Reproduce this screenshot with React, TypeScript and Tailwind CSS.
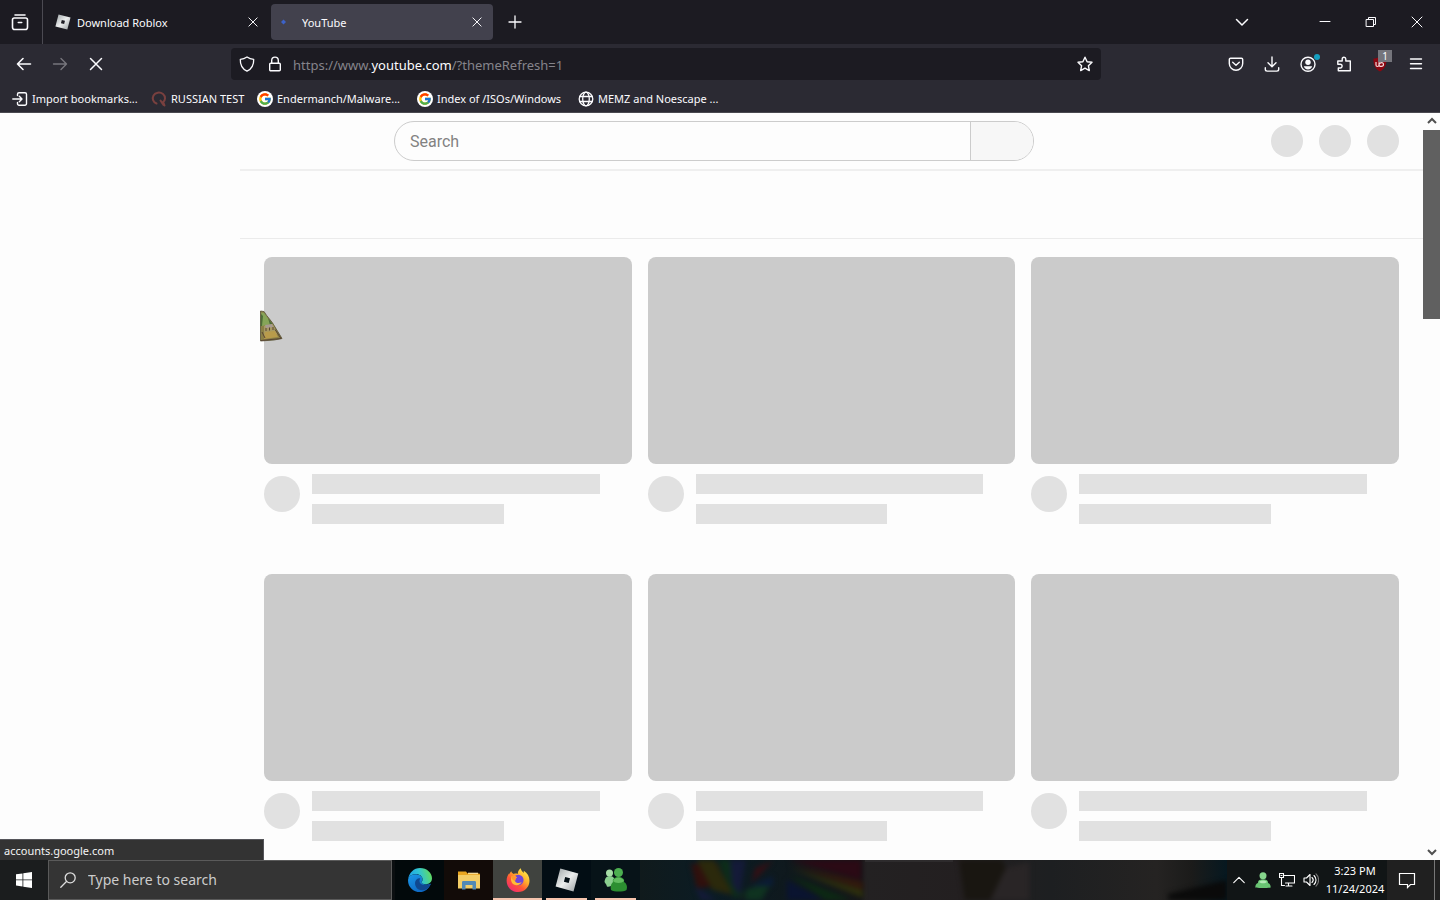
import React from "react";
import { FcGoogle } from "react-icons/fc";

type IconProps = { className?: string; children: React.ReactNode; box?: number };

function Icon({ className = "size-4", children, box = 16 }: IconProps) {
  return (
    <svg viewBox={`0 0 ${box} ${box}`} className={`${className} shrink-0`} fill="none" stroke="currentColor" strokeWidth="1.3" strokeLinecap="round" strokeLinejoin="round" aria-hidden="true">
      {children}
    </svg>
  );
}

const Cross = ({ className }: { className?: string }) => (
  <Icon className={className}><path d="M2.5 2.5l11 11M13.5 2.5l-11 11" /></Icon>
);

function RobloxLogo({ className = "size-4" }: { className?: string }) {
  return (
    <svg viewBox="0 0 24 24" className={`${className} shrink-0`} aria-hidden="true">
      <defs>
        <linearGradient id="silver" x1="0" y1="0" x2="1" y2="1">
          <stop offset="0" stopColor="#9aa2a4" />
          <stop offset=".5" stopColor="#eceeee" />
          <stop offset="1" stopColor="#989d9f" />
        </linearGradient>
      </defs>
      <path fill="url(#silver)" fillRule="evenodd" d="M5.3.6 23.3 5.4 18.5 23.4.6 18.6ZM10.2 8.9 8.9 13.7 13.7 15 15 10.2Z" />
    </svg>
  );
}

function EdgeLogo() {
  return (
    <svg viewBox="0 0 24 24" className="size-6" aria-hidden="true">
      <defs>
        <linearGradient id="edgeTop" x1="0" y1="0.6" x2="1" y2="0.4">
          <stop offset="0" stopColor="#1d9fe8" />
          <stop offset=".5" stopColor="#2fc4d4" />
          <stop offset="1" stopColor="#63db5c" />
        </linearGradient>
        <linearGradient id="edgeLow" x1="0" y1="0" x2=".7" y2="1">
          <stop offset="0" stopColor="#1b98e8" />
          <stop offset="1" stopColor="#0c64c0" />
        </linearGradient>
      </defs>
      <path fill="url(#edgeLow)" d="M.1 11.5C.8 7.7 4.200 6.200 7.500 6.200c4 0 7 2.200 7 5.200 0 1.200-.9 1.700-.9 2.600 0 2.300 3.600 3.400 8.600 1.700.5-.1.7.2.4.7C20.600 20.700 16.800 24 12 24 5 24-.6 18.300.1 11.500Z" />
      <path fill="#10488f" d="M8.800 11.200c-2.600 2-2.400 7.400 1.400 10 4 2.600 9.300.6 12.100-4.500.2-.5 0-.9-.5-.7-5 2-10.300.7-10.300-3.100 0-1 .7-1.600.7-2.300-.8-.5-2.300-.3-3.400.6Z" />
      <path fill="url(#edgeTop)" d="M.2 11C1 4.800 6 0 12 0c7 0 12 5 12 10.300 0 3.700-2.600 5.900-6 5.900-2.800 0-4.500-1-4.500-2 0-.7 1.100-1.100 1.100-3 0-2.800-3-5.300-6.900-5.300C3.800 5.900.9 8.300.2 11Z" />
    </svg>
  );
}

function FolderLogo() {
  return (
    <svg viewBox="0 0 24 24" className="size-6" aria-hidden="true">
      <path fill="#e8a520" d="M1 3.500h8l1.500 2H22a1 1 0 0 1 1 1V20H1Z" />
      <path fill="#f6dc96" d="M11 4.700h10v1.500H11Z" />
      <path fill="#f3cd66" d="M1 7h22v13.500H1Z" />
      <path fill="#5289b5" d="M5 21.500v-7.200A1.300 1.300 0 0 1 6.300 13h11.400a1.300 1.300 0 0 1 1.300 1.300v7.200h-3.500V17h-7v4.500Z" />
    </svg>
  );
}

function FirefoxLogo() {
  return (
    <svg viewBox="0 0 24 24" className="size-6" aria-hidden="true">
      <defs>
        <linearGradient id="fox" x1=".85" y1=".1" x2=".2" y2=".95">
          <stop offset="0" stopColor="#ffe84a" />
          <stop offset=".35" stopColor="#ffae2b" />
          <stop offset=".65" stopColor="#ff5535" />
          <stop offset="1" stopColor="#f22c70" />
        </linearGradient>
      </defs>
      <path fill="url(#fox)" d="M5.200 3.200c.5 1.500 1.400 2.300 2.600 2.700 1.200-.5 2.600-.5 4 0C11.700 3.500 13 1.300 14.800.2c.2 2.200 1.600 3.300 3.100 4.700-.1-.8-.2-1.600-.1-2.200 3.700 2.300 5.700 6 5.700 10C23.500 19 18.500 24 12.100 24S.6 19 .6 12.700c0-3 1.100-5.700 2.600-7.500v1.300c.5-1.300 1.200-2.300 2-3.300Z" />
      <circle cx="12.300" cy="12" r="5.300" fill="#7046d8" />
      <path fill="#ffbd36" d="M5.600 8.300c1.500-.7 3-.7 4 0 .8.600 1 .9 1.300 1-.2.700-1 1-1.400 1.500 0 1-.2 1.700-.5 2.200.9 2.500 4.500 2.700 6.700 1-1 3.600-7.700 4.600-9.900.5-1.200-2.200-.9-4.200-.2-6.200Z" />
      <path fill="#ff942f" d="M5.300 8.500c1.700-.7 3.300-.5 4.300.1.800.5 1.200.7 1.300.9-.5.7-1.100.9-1.400 1.400-.1.900-.3 1.500-.8 2.100-1.700-.7-3.100-2-3.400-4.500Z" />
    </svg>
  );
}

function Buddies() {
  return (
    <svg viewBox="0 0 24 24" className="size-6" aria-hidden="true">
      <circle cx="5.500" cy="5" r="3.500" fill="#a6dda5" />
      <path fill="#8bcf8f" d="M.5 14c.5-4 2-6 5.500-6s5.500 3 5 7c-1 3-3 3-4 3-2 1-4.500 1.500-4.500-1Z" />
      <circle cx="14.500" cy="4.500" r="4.500" fill="#4caf50" />
      <path fill="#2c8f31" d="M7 22c-1-5 1-7 2-8-1-3 2-5 5.500-5s6.500 2 5.500 5c2 1 4 4 2.500 8-3 2-12.500 2-15.500 0Z" />
      <path fill="#62bd60" d="M9 13c2 2.500 9 2.500 11 0-.5-2.300-3-3.500-5.500-3.500S9.500 10.700 9 13Z" />
    </svg>
  );
}

function Buddy() {
  return (
    <svg viewBox="0 0 16 16" className="size-4" aria-hidden="true">
      <circle cx="8" cy="3.800" r="3.500" fill="#86d58c" />
      <path fill="#69c473" d="M.3 15.500c0-2.500 1-4 2.700-4.500-.5-2.500 2-3.700 5-3.700s5.500 1.200 5 3.700c1.700.5 2.700 2 2.700 4.500-3 .7-12.400.7-15.400 0Z" />
      <path fill="#b3eab6" d="M4 10c2 1.800 6 1.800 8 0-1-1-2.200-1.500-4-1.500S5 9 4 10Z" />
    </svg>
  );
}

function ToolButton({ label, children, className = "" }: { label: string; children: React.ReactNode; className?: string }) {
  return (
    <button aria-label={label} className={`flex h-8 w-9 shrink-0 items-center justify-center ${className}`}>
      {children}
    </button>
  );
}

function TabStrip() {
  return (
    <div className="flex h-11 shrink-0 items-center bg-[#1c1b22]">
      <button aria-label="Recent browsing" className="flex h-full w-[43px] items-center justify-center border-r border-[#4b4a52] pr-0.5">
        <Icon className="size-[18px]" box={18}>
          <path strokeWidth="1.600" d="M4 2h10M1.500 6.800A1.800 1.800 0 0 1 3.300 5h11.400a1.800 1.800 0 0 1 1.800 1.800v7.400a2.300 2.300 0 0 1-2.300 2.300H3.800a2.300 2.300 0 0 1-2.300-2.300ZM7.300 9.500h3.400" />
        </Icon>
      </button>
      <div className="flex h-9 w-[228px] items-center gap-1.5 pl-3 pr-2">
        <RobloxLogo />
        <span className="grow pt-0.5">Download Roblox</span>
        <button aria-label="Close Download Roblox" className="flex size-5 items-center justify-center"><Cross className="size-3" /></button>
      </div>
      <div className="flex h-9 w-[222px] items-center rounded bg-[#42414d] pl-2 pr-1.5">
        <svg viewBox="0 0 16 16" className="mr-[7px] size-4" aria-hidden="true"><path fill="#3c62c8" d="M2 8 4.500 5.500 7 8 4.500 10.500Z" /></svg>
        <span className="grow pt-0.5">YouTube</span>
        <button aria-label="Close YouTube" className="flex size-5 items-center justify-center"><Cross className="size-3" /></button>
      </div>
      <ToolButton label="New tab" className="ml-1">
        <Icon><path d="M8 2v12M2 8h12" /></Icon>
      </ToolButton>
      <div className="ml-auto flex items-center">
        <ToolButton label="List all tabs" className="mr-[42px]"><Icon><path strokeWidth="1.500" d="M2.500 5.500 8 11l5.500-5.500" /></Icon></ToolButton>
        <button aria-label="Minimize" className="flex h-8 w-[46px] items-center justify-center"><Icon className="size-3" box={12}><path strokeWidth="1" d="M1 5.500h10" /></Icon></button>
        <button aria-label="Restore" className="flex h-8 w-[46px] items-center justify-center"><Icon className="size-3" box={12}><path strokeWidth="1" strokeLinejoin="miter" d="M1.500 3.500h7v7h-7ZM3.500 3.500v-2h7v7h-2" /></Icon></button>
        <button aria-label="Close window" className="flex h-8 w-[46px] items-center justify-center"><Icon className="size-3" box={12}><path strokeWidth="1" d="M1 1l10 10M11 1 1 11" /></Icon></button>
      </div>
    </div>
  );
}

function NavBar() {
  return (
    <div className="flex h-10 shrink-0 items-center pl-1.5 pr-1.5">
      <ToolButton label="Back"><Icon><path strokeWidth="1.600" d="M14.500 8h-13M7 2.500 1.500 8 7 13.500" /></Icon></ToolButton>
      <ToolButton label="Forward" className="text-[#77767d]"><Icon><path strokeWidth="1.400" d="M1.500 8h13M9 2.500 14.500 8 9 13.500" /></Icon></ToolButton>
      <ToolButton label="Stop"><Icon><path strokeWidth="1.500" d="M2.500 2.500l11 11M13.500 2.500l-11 11" /></Icon></ToolButton>
      <div className="ml-[117px] mr-[117px] flex h-8 min-w-0 grow items-center rounded bg-[#1c1b22] pl-2 pr-2">
        <Icon><path d="M8 .9C10 2.400 12.500 3.200 14.700 3.300 14.900 8.500 12.800 13 8 15.200 3.200 13 1.100 8.500 1.300 3.300 3.500 3.200 6 2.400 8 .9Z" /></Icon>
        <Icon className="ml-3 size-4"><path strokeWidth="1.400" d="M2.700 8.200a1 1 0 0 1 1-1h8.600a1 1 0 0 1 1 1v5.600a1 1 0 0 1-1 1H3.700a1 1 0 0 1-1-1ZM4.700 7V4.400a3.300 3.300 0 0 1 6.600 0V7" /></Icon>
        <div className="ml-2.5 grow whitespace-nowrap pt-0.5 text-[13px] text-[#85848b]" role="textbox" aria-label="Address">
          https://www.<span className="text-[#fbfbfe]">youtube.com</span>/?themeRefresh=1
        </div>
        <button aria-label="Bookmark this page"><Icon><path strokeWidth="1.400" d="m8 1.200 2.100 4.500 4.900.6-3.600 3.400.9 4.900L8 12.200l-4.300 2.400.9-4.900L1 6.300l4.900-.6Z" /></Icon></button>
      </div>
      <ToolButton label="Save to Pocket"><Icon><path strokeWidth="1.400" d="M1.300 3.500a1.300 1.300 0 0 1 1.300-1.300h10.800a1.300 1.300 0 0 1 1.300 1.300v4a6.700 6.700 0 0 1-13.400 0ZM4.700 6.300 8 9.300l3.300-3" /></Icon></ToolButton>
      <ToolButton label="Downloads"><Icon><path strokeWidth="1.400" d="M8 1v9.500M4 6.800l4 4 4-4M1.300 11.800v1.500a1.800 1.800 0 0 0 1.800 1.800h9.800a1.800 1.800 0 0 0 1.800-1.800v-1.500" /></Icon></ToolButton>
      <ToolButton label="Account" className="relative">
        <Icon><circle cx="8" cy="8.300" r="7" strokeWidth="1.400" /><circle cx="8" cy="6.300" r="2.700" fill="currentColor" stroke="none" /><path fill="currentColor" stroke="none" d="M3.800 10.200h8.400c-.5 2-2 3.200-4.200 3.200s-3.700-1.200-4.200-3.200Z" /></Icon>
        <span className="absolute right-1.5 top-1.5 size-1.5 rounded-full bg-[#159fc0]" />
      </ToolButton>
      <ToolButton label="Extensions"><Icon><path strokeWidth="1.400" d="M2.300 14.800V12h1.900a1.900 1.900 0 0 0 0-3.800H1.800V5h4.400V3.100a1.800 1.800 0 0 1 3.600 0V5h4.500v9.800Z" /></Icon></ToolButton>
      <ToolButton label="uBlock Origin" className="relative">
        <svg viewBox="0 0 16 16" className="size-4" aria-hidden="true">
          <path fill="#8c0610" d="M8 .5C10 2 12.500 2.500 14.500 2.500 14.700 8.500 13 13 8 15.500 3 13 1.300 8.500 1.500 2.500 3.500 2.500 6 2 8 .5Z" />
          <path fill="none" stroke="#f4d9db" strokeWidth="1.200" d="M4 6v3c0 2 3 2 3 0V6.200M7 9c0 2 4.500 2 4.500-.5S8 6 7 8.500" />
        </svg>
        <span className="absolute right-1.5 top-0.5 h-3 w-3.5 bg-[#75757c] text-center text-[10px] leading-3 text-white">1</span>
      </ToolButton>
      <ToolButton label="Menu"><Icon><path strokeWidth="1.400" d="M2.500 3h11M2.500 7.800h11M2.500 12.500h11" /></Icon></ToolButton>
    </div>
  );
}

function BookmarkBar() {
  return (
    <nav aria-label="Bookmarks" className="flex h-7 shrink-0 items-center gap-3 pl-3 pt-0.5 whitespace-nowrap">
      <a href="#" className="flex w-[127px] items-center gap-1">
        <Icon><path strokeWidth="1.400" d="M5.500 4.500V3.300A1.500 1.500 0 0 1 7 1.800h6a1.500 1.500 0 0 1 1.500 1.500v9.400a1.500 1.500 0 0 1-1.500 1.500H7a1.500 1.500 0 0 1-1.500-1.500v-1.200M.8 8h9M7.300 5.300 10 8l-2.700 2.700" /></Icon>
        Import bookmarks...
      </a>
      <a href="#" className="flex w-[94px] items-center gap-1">
        <Icon className="size-4 text-[#79403f]"><path strokeWidth="2" d="M5.500 12.500C2 11 .9 7.500 2.500 4.500 4.300 1.300 9 .7 12 3c3 2.600 2.300 6.300.2 8l1.300 3.500M9.500 9.500l3 4.500" /></Icon>
        RUSSIAN TEST
      </a>
      <a href="#" className="flex w-[148px] items-center gap-1">
        <span className="flex size-4 shrink-0 items-center justify-center rounded-full bg-white"><FcGoogle className="size-3.5" /></span>
        Endermanch/Malware...
      </a>
      <a href="#" className="flex w-[149px] items-center gap-1">
        <span className="flex size-4 shrink-0 items-center justify-center rounded-full bg-white"><FcGoogle className="size-3.5" /></span>
        Index of /ISOs/Windows
      </a>
      <a href="#" className="flex items-center gap-1">
        <Icon><circle cx="8" cy="8" r="6.800" /><ellipse cx="8" cy="8" rx="3.300" ry="6.800" /><path d="M1.700 5.500h12.600M1.700 10.500h12.600" /></Icon>
        MEMZ and Noescape ...
      </a>
    </nav>
  );
}

function VideoPlaceholder() {
  return (
    <div className="pb-[50px]">
      <div className="aspect-video rounded-lg bg-[#cbcbcb]" />
      <div className="mt-2.5 flex gap-3">
        <div className="mt-0.5 size-9 shrink-0 rounded-full bg-[#e1e1e1]" />
        <div className="flex grow flex-col gap-2.5">
          <div className="h-5 w-[90%] bg-[#e1e1e1]" />
          <div className="h-5 w-[60%] bg-[#e1e1e1]" />
        </div>
      </div>
    </div>
  );
}

function Page() {
  return (
    <div className="relative flex min-h-0 grow bg-[#fdfdfd]">
      <aside className="w-60 shrink-0" />
      <main className="min-w-0 grow overflow-hidden">
        <header className="flex h-[58px] items-center border-b-2 border-[#efefef] pr-6">
          <form className="ml-[154px] flex h-10 w-[640px] overflow-hidden rounded-full border border-[#cccccc]">
            <input aria-label="Search" placeholder="Search" className="min-w-0 grow bg-transparent px-[15px] pt-0.5 font-[Roboto,sans-serif] text-base placeholder:text-[#828282] outline-none" />
            <button type="button" aria-label="Submit search" className="w-[63px] border-l border-[#cccccc] bg-[#f7f7f7]" />
          </form>
          <div className="ml-auto flex gap-4">
            <div className="size-8 rounded-full bg-[#e1e1e1]" />
            <div className="size-8 rounded-full bg-[#e1e1e1]" />
            <div className="size-8 rounded-full bg-[#e1e1e1]" />
          </div>
        </header>
        <div className="h-[68px] border-b border-[#ebebeb]" />
        <div className="grid grid-cols-3 gap-x-4 px-6 pt-[18px]">
          {[0, 1, 2, 3, 4, 5].map((n) => <VideoPlaceholder key={n} />)}
        </div>
      </main>
      <div className="flex w-[17px] shrink-0 flex-col items-center text-[#505050]">
        <Icon className="my-0.5 size-3" box={12}><path strokeWidth="2" strokeLinecap="butt" strokeLinejoin="miter" d="M2 8 6 4l4 4" /></Icon>
        <div className="mt-px h-[189px] w-full bg-[#606060]" />
        <Icon className="mb-0.5 mt-auto size-3" box={12}><path strokeWidth="2" strokeLinecap="butt" strokeLinejoin="miter" d="M2 4l4 4 4-4" /></Icon>
      </div>
      <div className="absolute bottom-0 left-0 h-[21px] w-[264px] border-r border-t border-[#55555a] bg-[#333333] pl-1 pt-px leading-5 text-[#f4f4f4]">accounts.google.com</div>
      <svg viewBox="0 0 24 32" className="absolute left-[259px] top-[197px] h-8 w-6" aria-hidden="true">
        <path fill="#8b8046" stroke="#565034" strokeWidth=".8" d="M1.500 1 5 1.500C8 7 13 11 16 17l7 11.500-8 1.500-13.500 1Z" />
        <path fill="#86a558" d="M2.500 2.500 5 3l8 11-10 2Z" />
        <path fill="#4e6d38" d="M2 4 4 6 3 16H1.500ZM9 8l6 8-4-1Z" />
        <path fill="#a79a62" d="M5 16l9-2 4 10-13 3Z" />
        <path fill="#a89a92" d="M6 15l7-1 1 3-7 1Z" />
        <path fill="#b89b4b" d="M6 22l10-1 3 6-14 2Z" />
        <path fill="none" stroke="#5a4534" d="M7 18v3M10.500 17.500v3M14 17v3M2 30.500l20-2-6-9M3 22l3 6" />
      </svg>
    </div>
  );
}

function TaskButton({ label, children, className = "" }: { label: string; children: React.ReactNode; className?: string }) {
  return (
    <button aria-label={label} className={`relative flex h-10 w-[49px] shrink-0 items-center justify-center ${className}`}>
      {children}
    </button>
  );
}

function Wallpaper() {
  return (
    <svg viewBox="0 0 600 40" preserveAspectRatio="none" className="h-10 min-w-0 grow" aria-hidden="true">
      <defs>
        <linearGradient id="base">
          <stop offset="0" stopColor="#101a1c" /><stop offset=".12" stopColor="#0b1c24" /><stop offset=".28" stopColor="#10181c" />
          <stop offset=".375" stopColor="#151618" /><stop offset=".385" stopColor="#232122" /><stop offset=".55" stopColor="#231f20" /><stop offset=".7" stopColor="#1d1f21" />
          <stop offset=".88" stopColor="#252322" /><stop offset=".94" stopColor="#1b1b1a" /><stop offset="1" stopColor="#061820" />
        </linearGradient>
        <filter id="soft" x="-10%" y="-10%" width="120%" height="120%" colorInterpolationFilters="sRGB"><feGaussianBlur stdDeviation="2.500" /></filter>
      </defs>
      <path fill="url(#base)" d="M0 0h600v40H0Z" />
      <g filter="url(#soft)">
        <path fill="#30100d" d="M52 4h28l6 22-28 2Z" />
        <path fill="#2b290c" d="M58 0h18l14 24 18 14-34-8Z" />
        <path fill="#0d2d19" d="M80 0h12l14 36-10 2Z" />
        <path fill="#141a38" d="M92 0h16l-6 36-8-12ZM56 26l22 14H62Z" />
        <path fill="#340f14" d="M118 8l18-7-22 22Z" />
        <path fill="#0f3320" d="M108 30l28-10-12 20h-16Z" />
        <path fill="#0b1b35" d="M112 26l24-10v10Z" />
        <path fill="#2b0a15" d="M152 0h74v20Z" />
        <path fill="#33190d" d="M152 4l76 18v8Z" />
        <path fill="#2d2f0d" d="M152 8l76 22v8Z" />
        <path fill="#0c2913" d="M152 15l64 25h-26Z" />
        <path fill="#0a1430" d="M150 20l38 20h-38Z" />
        <path fill="#191611" d="M326 0h44l10 20-18 20h-30Z" />
        <path fill="#292526" d="M374 8l24-6v38h-40Z" />
        <path fill="#0a0a0a" d="M540 34l60-14v20h-60Z" />
      </g>
      <path stroke="#3a3839" d="M230 1h90" />
    </svg>
  );
}

function Taskbar() {
  return (
    <footer className="flex h-10 shrink-0 items-center bg-[#0b0f11]">
      <button aria-label="Start" className="flex h-10 w-12 shrink-0 items-center justify-center bg-[#1b1d1e]">
        <svg viewBox="0 0 16 16" className="size-4" aria-hidden="true"><path fill="#fff" d="M0 2.300 6.500 1.400v6.100H0ZM7.300 1.300 16 0v7.500H7.300ZM0 8.300h6.500v6.200L0 13.600ZM7.300 8.300H16V16l-8.700-1.300Z" /></svg>
      </button>
      <label className="flex h-10 w-[344px] shrink-0 items-center gap-3 border border-[#5a5a5a] bg-[#343434] pl-[11px] text-[#dddddd]">
        <Icon><path d="M15.200 5.800a5 5 0 1 1-10 0 5 5 0 0 1 10 0ZM6.700 9.300.8 15.200" /></Icon>
        <input aria-label="Type here to search" placeholder="Type here to search" className="min-w-0 grow bg-transparent text-[14px] placeholder:text-[#cccccc] outline-none" />
      </label>
      <div className="ml-[3px] flex">
        <TaskButton label="Microsoft Edge" className="bg-[#02090b]"><EdgeLogo /></TaskButton>
        <TaskButton label="File Explorer" className="bg-[#120b08]"><FolderLogo /></TaskButton>
        <TaskButton label="Firefox" className="bg-[#40433f]"><FirefoxLogo /><span className="absolute inset-x-0 bottom-0 h-0.5 bg-[#f5c4ad]" /></TaskButton>
        <TaskButton label="Roblox" className="bg-[#020d14]"><RobloxLogo className="size-6" /><span className="absolute inset-x-1 bottom-0 h-0.5 bg-[#f5c4ad]" /></TaskButton>
        <TaskButton label="Messenger" className="bg-[#071318]"><Buddies /><span className="absolute inset-x-1 bottom-0 h-0.5 bg-[#f5c4ad]" /></TaskButton>
      </div>
      <Wallpaper />
      <div className="flex h-10 shrink-0 items-center bg-[#111516] text-white">
        <button aria-label="Show hidden icons" className="flex w-6 justify-center"><Icon className="size-3.5"><path d="M2 11l6-6 6 6" /></Icon></button>
        <button aria-label="Messenger status" className="flex w-6 justify-center"><Buddy /></button>
        <button aria-label="Network" className="flex w-6 justify-center"><Icon><path strokeWidth="1.100" strokeLinejoin="miter" d="M5.500 3.500h10v7.500h-9M9.500 11v3M7 14h6M.5 1.500h4v4h-4ZM2.500 5.500v8h3M2 3.500h1" /></Icon></button>
        <button aria-label="Volume" className="flex w-6 justify-center"><Icon><path strokeWidth="1.100" d="M1 6h2.500L7 2.500v11L3.500 10H1ZM9 5.500c1.500 1.500 1.500 3.500 0 5M11 3.500c2.700 2.700 2.700 6.300 0 9" /><path stroke="#777777" strokeWidth="1.100" d="M13 1.800c3.500 3.500 3.500 8.900 0 12.400" /></Icon></button>
        <div className="w-16 text-center"><div>3:23 PM</div><div>11/24/2024</div></div>
        <button aria-label="Notifications" className="flex h-10 w-10 items-center justify-center bg-[#202020]"><Icon className="size-[18px]" box={18}><path strokeWidth="1.200" strokeLinejoin="miter" d="M1.500 2.500h15v11h-4l-3 3v-3h-8Z" /></Icon></button>
        <div className="h-10 w-2 border-r border-[#777777] bg-[#202020]" />
        <div className="h-10 w-[5px] bg-[#202020]" />
      </div>
    </footer>
  );
}

export default function App() {
  return (
    <div className="flex h-screen flex-col overflow-hidden bg-[#2b2a33] font-['Noto_Sans','Open_Sans',sans-serif] text-[11px] leading-[18px] text-[#fbfbfe]">
      <TabStrip />
      <NavBar />
      <BookmarkBar />
      <div className="h-px shrink-0 bg-[#4a4950]" />
      <Page />
      <Taskbar />
    </div>
  );
}
